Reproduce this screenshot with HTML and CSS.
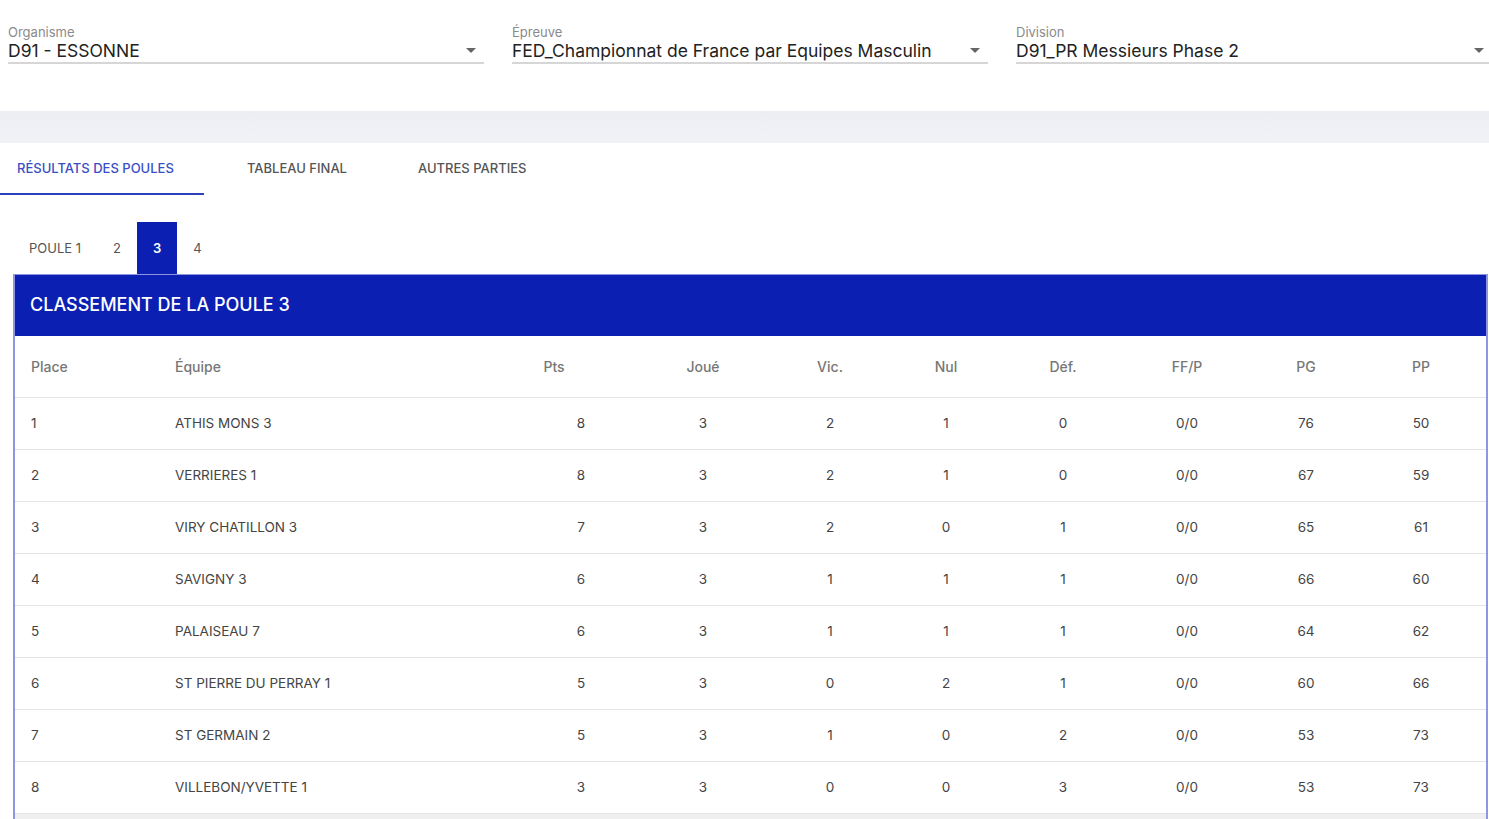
FILE: index.html
```html
<!DOCTYPE html>
<html lang="fr">
<head>
  <meta charset="UTF-8">
  <meta name="viewport" content="width=device-width, initial-scale=1.0">
  <title>Résultats des poules</title>
  <link rel="stylesheet" href="styles.css">
</head>
<body>
  <div class="search">
    <div class="search-title">Critères de recherche</div>
    <div class="filters">
      <div class="field">
        <label>Organisme</label>
        <div class="select">
          <span>D91 - ESSONNE</span>
          <span class="arrow"></span>
        </div>
      </div>
      <div class="field">
        <label>Épreuve</label>
        <div class="select">
          <span>FED_Championnat de France par Equipes Masculin</span>
          <span class="arrow"></span>
        </div>
      </div>
      <div class="field">
        <label>Division</label>
        <div class="select">
          <span>D91_PR Messieurs Phase 2</span>
          <span class="arrow"></span>
        </div>
      </div>
    </div>
  </div>

  <div class="band"></div>

  <div class="content">
    <div class="tabs">
      <div class="tab active">Résultats des poules</div>
      <div class="tab">Tableau final</div>
      <div class="tab">Autres parties</div>
    </div>

    <div class="poules">
      <div class="poule">Poule 1</div>
      <div class="poule">2</div>
      <div class="poule active">3</div>
      <div class="poule">4</div>
    </div>

    <div class="panel">
      <div class="panel-head">Classement de la poule 3</div>
      <table class="ranking">
        <colgroup>
          <col style="width:144px">
          <col style="width:308px">
          <col style="width:174px">
          <col style="width:124px">
          <col style="width:130px">
          <col style="width:102px">
          <col style="width:132px">
          <col style="width:116px">
          <col style="width:122px">
          <col>
        </colgroup>
        <thead>
          <tr>
            <th class="left">Place</th>
            <th class="left">Équipe</th>
            <th>Pts</th>
            <th>Joué</th>
            <th>Vic.</th>
            <th>Nul</th>
            <th>Déf.</th>
            <th>FF/P</th>
            <th>PG</th>
            <th class="last">PP</th>
          </tr>
        </thead>
        <tbody id="rows"></tbody>
      </table>
      <div class="panel-foot"></div>
    </div>
  </div>

  <script>
    const teams = [
      [1, 'ATHIS MONS 3', 8, 3, 2, 1, 0, '0/0', 76, 50],
      [2, 'VERRIERES 1', 8, 3, 2, 1, 0, '0/0', 67, 59],
      [3, 'VIRY CHATILLON 3', 7, 3, 2, 0, 1, '0/0', 65, 61],
      [4, 'SAVIGNY 3', 6, 3, 1, 1, 1, '0/0', 66, 60],
      [5, 'PALAISEAU 7', 6, 3, 1, 1, 1, '0/0', 64, 62],
      [6, 'ST PIERRE DU PERRAY 1', 5, 3, 0, 2, 1, '0/0', 60, 66],
      [7, 'ST GERMAIN 2', 5, 3, 1, 0, 2, '0/0', 53, 73],
      [8, 'VILLEBON/YVETTE 1', 3, 3, 0, 0, 3, '0/0', 53, 73]
    ];

    const body = document.getElementById('rows');
    teams.forEach(team => {
      const tr = document.createElement('tr');
      team.forEach((value, i) => {
        const td = document.createElement('td');
        td.textContent = value;
        if (i < 2) td.className = 'left';
        if (i === 2) td.className = 'pts';
        if (i === 9) td.className = 'last';
        tr.appendChild(td);
      });
      body.appendChild(tr);
    });
  </script>
</body>
</html>
```

FILE: styles.css
```css
* {
  margin: 0;
  padding: 0;
  box-sizing: border-box;
}

body {
  font-family: Inter, "Open Sans", sans-serif;
  background-color: #fff;
  color: #333;
  overflow: hidden;
}

/* search criteria */
.search {
  display: flow-root;
  height: 111px;
  padding-left: 8px;
}

.search-title {
  margin-top: -16px;
  height: 20px;
  font-size: 17px;
  line-height: 20px;
  letter-spacing: 1.5px;
  text-transform: uppercase;
  color: #7d88e0;
}

.filters {
  display: flex;
  gap: 28px;
  margin-top: 21px;
  width: 1490px;
}

.field {
  width: 476px;
  flex-shrink: 0;
}

.field label {
  display: block;
  font-size: 13px;
  line-height: 14px;
  color: #8a8a8a;
}

.select {
  display: flex;
  justify-content: space-between;
  align-items: flex-start;
  height: 25px;
  padding-top: 3px;
  font-size: 17.5px;
  line-height: 18px;
  color: #222;
  border-bottom: 2px solid #d6d6d6;
  padding-right: 8px;
}

.arrow {
  width: 0;
  height: 0;
  margin-top: 6px;
  border-left: 5px solid transparent;
  border-right: 5px solid transparent;
  border-top: 5px solid #666;
}

.band {
  height: 32px;
  background: linear-gradient(#eceef4, #f1f2f6);
}

/* tabs */
.tabs {
  display: flex;
  height: 52px;
}

.tab {
  font-size: 13px;
  font-weight: 500;
  text-transform: uppercase;
  color: #555;
  line-height: 50px;
  border-bottom: 2px solid transparent;
}

.tab:nth-child(1) {
  width: 204px;
  padding-left: 17px;
}

.tab:nth-child(2) {
  width: 171px;
  padding-left: 43px;
}

.tab:nth-child(3) {
  padding-left: 43px;
}

.tab.active {
  color: #3a4ec5;
  border-bottom-color: #2c3fbe;
}

.poules {
  display: flex;
  margin: 27px 0 0 13px;
  height: 52px;
}

.poule {
  font-size: 13px;
  color: #555;
  line-height: 52px;
  padding: 0 16px;
}

.poule:first-child {
  text-transform: uppercase;
}

.poule.active {
  background-color: #0b20b3;
  color: #fff;
  font-weight: 600;
  padding: 0 16px;
}

/* ranking panel */
.panel {
  margin: 0 1px 0 13px;
  border: 2px solid #8e95e3;
  border-bottom: none;
}

.panel-head {
  background-color: #0b20b3;
  color: #fff;
  font-size: 18px;
  font-weight: 500;
  text-transform: uppercase;
  height: 61px;
  line-height: 60px;
  padding-left: 15px;
  margin-top: -1px;
}

.ranking {
  width: 100%;
  border-collapse: collapse;
  table-layout: fixed;
}

.ranking th {
  height: 61px;
  font-size: 14px;
  font-weight: 500;
  color: #777;
  text-align: center;
  border-bottom: 1px solid #e4e4e4;
}

.ranking td {
  height: 52px;
  font-size: 13.5px;
  color: #444;
  text-align: center;
  border-bottom: 1px solid #e4e4e4;
}

.ranking .left {
  text-align: left;
  padding-left: 16px;
}

.ranking td.pts {
  padding-left: 54px;
}

.ranking .last {
  padding-right: 11px;
}

.panel-foot {
  height: 20px;
  background-color: #efefef;
}
```
